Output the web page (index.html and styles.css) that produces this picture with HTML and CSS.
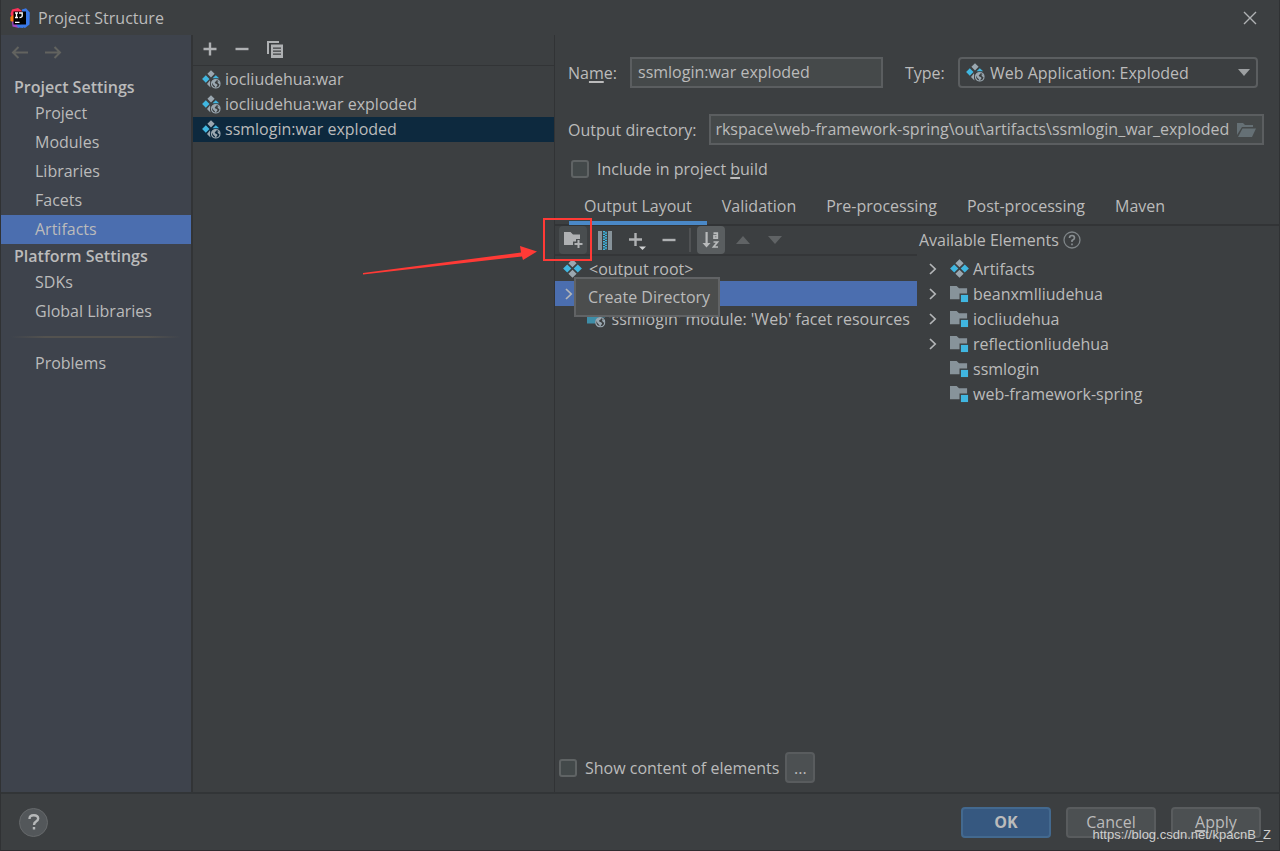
FILE: index.html
```html
<!DOCTYPE html>
<html lang="en">
<head>
<meta charset="utf-8">
<title>Project Structure</title>
<link rel="stylesheet" href="styles.css">
</head>
<body>
<svg class="defs" aria-hidden="true">
  <defs>
    <symbol id="artifact" viewBox="0 0 18 18">
      <path fill="#9aa7b0" d="M9 .2 12.900 4 9 7.900 5.100 4zM9 10.100l3.900 3.900L9 17.800 5.100 14z"/>
      <path fill="#40b6e0" d="M4 5.100 7.900 9 4 12.900.100 9zM14 5.100 17.900 9 14 12.900 10.100 9z"/>
    </symbol>
    <symbol id="globe" viewBox="0 0 10 10">
      <circle cx="5" cy="5" r="4.300" fill="none" stroke="#9aa7b0" stroke-width="1.200"/>
      <path fill="#9aa7b0" d="M1 3.500C1.500 2 3 .8 5 .8c1 .2 1 1 .3 1.600L4 3.200l.2 1.300 1.600.6 1 1.200L5.600 8 4.800 9.300 4 7.500 2.500 6zM7 2l2 1.500.3 2L7.800 5 6.800 3.600z"/>
    </symbol>
    <symbol id="web-artifact" viewBox="0 0 19 19">
      <path fill="#9aa7b0" d="M9 .2 12.600 3.800 9 7.400 5.400 3.800zM8 10.300 8.200 12.500 8 15l.5 2.400L5 14z"/>
      <path fill="#40b6e0" d="M3.800 5.200 7.500 9 3.800 12.800.100 9zM10.500 8.300 13.800 5.200 17.200 8.300z"/>
      <use href="#globe" x="8.800" y="8.800" width="10" height="10"/>
    </symbol>
    <symbol id="module" viewBox="0 0 20 18">
      <path fill="#87939a" d="M0 1h7l2.500 2.500H18V9h-8v6H0z"/>
      <path fill="#40b6e0" d="M11.500 10.500h7.500V18h-7.500z"/>
    </symbol>
    <symbol id="web-folder" viewBox="0 0 19 18">
      <path fill="#3e8ea8" d="M0 1h7l2.500 2.500H18V8h-5c-3 0-5 3-4.500 6H0z"/>
      <use href="#globe" x="8" y="7.500" width="10.500" height="10.500"/>
    </symbol>
    <symbol id="plus" viewBox="0 0 14 14"><path fill="#afb1b3" d="M5.800 .500h2.400v5.300H13.500v2.400H8.200V13.500H5.800V8.200H.500V5.800h5.300z"/></symbol>
    <symbol id="minus" viewBox="0 0 14 14"><path fill="#afb1b3" d="M.500 5.800h13v2.400H.500z"/></symbol>
    <symbol id="chevron" viewBox="0 0 8 12"><path fill="none" stroke="#b4b6b8" stroke-width="1.700" d="m1 1 5.200 5L1 11"/></symbol>
  </defs>
</svg>

<div class="dialog">
  <header class="titlebar">
    <svg class="logo" viewBox="0 0 20 20" aria-hidden="true">
      <path fill="#fc3159" d="M2 1.500 8 0l4 3v5L4 14 .500 6z"/>
      <path fill="#f97a12" d="M.3 9 4 6.500v8L.500 13z"/>
      <path fill="#a347c4" d="M2 13.500h5L9 20l-6.500-1.500z"/>
      <path fill="#3978e8" d="m12 1.500 4-1.200 3.800 4.200-.3 12L15 20l-4-1.500z"/>
      <path fill="#3978e8" d="m6 16 8 .500L13 20l-5-.500z"/>
      <path d="M3.500 3.500h12.500v13H3.500z"/>
      <path fill="none" stroke="#fff" stroke-width="1.300" d="M5 5h3M6.500 5v4.500M5 9.500h3M9 5h3.200v3Q12 9.500 9.500 9.500M5 14.300h4.500"/>
    </svg>
    <h1>Project Structure</h1>
    <button class="close" aria-label="Close"><svg viewBox="0 0 14 14" width="14" height="14"><path fill="none" stroke="#b0b2b4" stroke-width="1.400" d="m1 1 12 12M13 1 1 13"/></svg></button>
  </header>

  <div class="body">
    <nav class="sidebar" aria-label="Settings sections">
      <div class="history">
        <button aria-label="Back" disabled><svg viewBox="0 0 17 13" width="17" height="13"><path fill="none" stroke="#62635f" stroke-width="2" d="M17 6.500H2M7.500 1 2 6.500 7.500 12"/></svg></button>
        <button aria-label="Forward" disabled><svg viewBox="0 0 17 13" width="17" height="13"><path fill="none" stroke="#62635f" stroke-width="2" d="M0 6.500h15M9.500 1 15 6.500 9.500 12"/></svg></button>
      </div>
      <h2>Project Settings</h2>
      <a href="#project">Project</a>
      <a href="#modules">Modules</a>
      <a href="#libraries">Libraries</a>
      <a href="#facets">Facets</a>
      <a href="#artifacts" class="current" aria-current="page">Artifacts</a>
      <h2>Platform Settings</h2>
      <a href="#sdks">SDKs</a>
      <a href="#global">Global Libraries</a>
      <hr>
      <a href="#problems">Problems</a>
    </nav>

    <section class="artifacts" aria-label="Artifacts">
      <div class="list-tools">
        <button aria-label="Add"><svg width="14" height="14"><use href="#plus"/></svg></button>
        <button aria-label="Remove"><svg width="14" height="14"><use href="#minus"/></svg></button>
        <button aria-label="Copy"><svg width="16" height="17" viewBox="0 0 16 17"><path fill="#afb1b3" d="M0 0h12v2H2v11H0z"/><path fill="#afb1b3" fill-rule="evenodd" d="M4 3.500h12V17H4zM6 6.500v1.200h8V6.500zM6 9.500v1.200h8V9.500zM6 12.500v1.200h8v-1.200z"/></svg></button>
      </div>
      <ul class="rows">
        <li><svg class="icon"><use href="#web-artifact"/></svg>iocliudehua:war</li>
        <li><svg class="icon"><use href="#web-artifact"/></svg>iocliudehua:war exploded</li>
        <li class="chosen"><svg class="icon"><use href="#web-artifact"/></svg>ssmlogin:war exploded</li>
      </ul>
    </section>

    <main class="editor">
      <div class="name-row">
        <label for="name">Na<u>m</u>e:</label>
        <input class="field" id="name" type="text" value="ssmlogin:war exploded">
        <label class="type-label" for="type">Type:</label>
        <div class="type">
          <svg class="icon"><use href="#web-artifact"/></svg>
          <select id="type"><option>Web Application: Exploded</option></select>
          <svg class="arrow" viewBox="0 0 12 7"><path fill="#9c9fa1" d="M0 0h12L6 7z"/></svg>
        </div>
      </div>
      <div class="output-row">
        <label for="output">Output directory:</label>
        <div class="field path">
          <input id="output" type="text" value="Workspace\web-framework-spring\out\artifacts\ssmlogin_war_exploded">
          <button aria-label="Browse"><svg viewBox="0 0 19 14" width="19" height="14"><path fill="#657075" d="M0 0h6l2 2h8v2H5L0 12zM5.500 5.500H19L15 14H1z"/></svg></button>
        </div>
      </div>
      <label class="check build"><input type="checkbox"><span>Include in project <u>b</u>uild</span></label>

      <div class="tabs" role="tablist">
        <button role="tab" class="active" aria-selected="true">Output Layout</button>
        <button role="tab">Validation</button>
        <button role="tab">Pre-processing</button>
        <button role="tab">Post-processing</button>
        <button role="tab">Maven</button>
      </div>

      <div class="layout">
        <section class="output" aria-label="Output layout">
          <div class="tools">
            <button class="hover" aria-label="Create Directory"><svg width="19" height="16" viewBox="0 0 19 16"><path fill="#afb1b3" d="M0 0h6.500L9 2.500h7V7h-4v2.500H9V13H0z"/><path fill="#afb1b3" d="M13.500 8h2v3H18.500v2h-3v3h-2v-3h-3v-2h3z"/></svg></button>
            <button aria-label="Create Archive"><svg width="14" height="19" viewBox="0 0 14 19"><path fill="#87939a" d="M0 0h4v19H0zM10 0h4v19h-4z"/><path fill="none" stroke="#40b6e0" stroke-width="2" stroke-dasharray="1.500 1" d="M6 0v19"/><path fill="none" stroke="#40b6e0" stroke-width="2" stroke-dasharray="1.500 1" stroke-dashoffset="1.200" d="M8 0v19"/></svg></button>
            <button aria-label="Add Copy of"><svg width="20" height="20" viewBox="0 0 20 20"><path fill="#afb1b3" d="M7.300 3h2.400v5.300H15v2.400H9.700V16H7.300v-5.300H2V8.300h5.300z"/><path fill="#d0d2d3" d="M12 16.500h7L15.500 20z"/></svg></button>
            <button aria-label="Remove"><svg width="14" height="14"><use href="#minus"/></svg></button>
            <i class="divider"></i>
            <button class="pressed" aria-label="Sort by name" aria-pressed="true"><svg width="18" height="18" viewBox="0 0 18 18"><path fill="#b8babb" d="M3.500 1h2.200v11H8.500l-4 4.500L.500 12h3z"/><path fill="none" stroke="#b8babb" stroke-width="1.700" d="M11.500 2.200H15.300V7.200H12V4.700h3.300M11.500 11h4l-4 5h4.500"/></svg></button>
            <button aria-label="Move Up" disabled><svg width="14" height="8" viewBox="0 0 14 8"><path fill="#606365" d="M0 8h14L7 0z"/></svg></button>
            <button aria-label="Move Down" disabled><svg width="14" height="8" viewBox="0 0 14 8"><path fill="#606365" d="M0 0h14L7 8z"/></svg></button>
          </div>
          <ul class="rows tree">
            <li><svg class="icon"><use href="#artifact"/></svg>&lt;output root&gt;</li>
            <li class="focused" aria-label="Selected element"><svg class="chevron"><use href="#chevron"/></svg></li>
            <li class="nested"><svg class="icon"><use href="#web-folder"/></svg>'ssmlogin' module: 'Web' facet resources</li>
          </ul>
          <div class="tooltip" role="tooltip">Create Directory</div>
          <div class="highlight"></div>
          <svg class="pointer" viewBox="0 0 176 32" aria-hidden="true"><path fill="#ff3a36" d="M1 28 159 7.500 158 1l17 5.500L161 15l-1-3.500L1 29.500z"/></svg>
        </section>
        <section class="available">
          <h3>Available Elements <svg viewBox="0 0 18 18" width="18" height="18" aria-hidden="true"><circle cx="9" cy="9" r="8" fill="none" stroke="#7f8588" stroke-width="1.300"/><path fill="none" stroke="#8b9194" stroke-width="1.600" d="M6.500 7q0-2.500 2.500-2.500T11.500 7Q11.500 8.200 9 9.500V11M9 12.500v1.700"/></svg></h3>
          <ul class="rows">
            <li><svg class="chevron"><use href="#chevron"/></svg><svg class="icon"><use href="#artifact"/></svg>Artifacts</li>
            <li><svg class="chevron"><use href="#chevron"/></svg><svg class="icon"><use href="#module"/></svg>beanxmlliudehua</li>
            <li><svg class="chevron"><use href="#chevron"/></svg><svg class="icon"><use href="#module"/></svg>iocliudehua</li>
            <li><svg class="chevron"><use href="#chevron"/></svg><svg class="icon"><use href="#module"/></svg>reflectionliudehua</li>
            <li class="leaf"><svg class="icon"><use href="#module"/></svg>ssmlogin</li>
            <li class="leaf"><svg class="icon"><use href="#module"/></svg>web-framework-spring</li>
          </ul>
        </section>
      </div>

      <div class="content-row">
        <label class="check"><input type="checkbox"><span>Show content of elements</span></label>
        <button class="btn more">...</button>
      </div>
    </main>
  </div>

  <footer class="footer">
    <button class="help" aria-label="Help"><svg width="12" height="16" viewBox="0 0 12 16"><path fill="none" stroke="#b6b8b9" stroke-width="2.400" d="M1.500 5Q1.500 1.200 5.800 1.200T10.200 4.600Q10.200 6.200 8 7.600 6 8.700 6 11M6 13v2.500"/></svg></button>
    <button class="btn primary">OK</button>
    <button class="btn">Cancel</button>
    <button class="btn"><span><u>A</u>pply</span></button>
    <span class="watermark">https://blog.csdn.net/kpacnB_Z</span>
  </footer>
</div>
<script src="app.js"></script>
</body>
</html>
```
FILE: styles.css
```css
* { box-sizing: border-box; }
body {
  margin: 0;
  background: #3c3f41;
  color: #bbbbbb;
  font: 16px/24px "Open Sans", "Noto Sans", sans-serif;
}
button, input, select { font: inherit; color: inherit; margin: 0; }
button { border: 0; padding: 0; background: none; display: flex; align-items: center; justify-content: center; }
h1, h2, h3, ul { margin: 0; padding: 0; font-size: inherit; font-weight: 400; }
ul { list-style: none; }
svg { flex: none; display: block; }
u { text-underline-offset: 2px; text-decoration-thickness: 2px; text-decoration-skip-ink: none; }
.defs { position: absolute; width: 0; height: 0; }

.dialog {
  min-height: 100vh;
  display: flex;
  flex-direction: column;
  border-left: 1px solid #303234;
  border-right: 1px solid #303234;
  border-bottom: 1px solid #2e2c30;
}
.titlebar { display: flex; align-items: center; gap: 8px; height: 35px; padding: 0 22px 0 9px; }
.titlebar .logo { width: 20px; height: 20px; }
.close { margin-left: auto; }

.body { flex: 1; display: flex; border-bottom: 2px solid #323537; }

.sidebar { width: 192px; flex: none; background: #3e434c; border-right: 2px solid #323436; }
.history { display: flex; gap: 17px; height: 40px; padding: 11px 10px 0; align-items: flex-start; }
.sidebar h2 { font-weight: 600; padding-left: 13px; }
.sidebar a { display: block; line-height: 29px; padding-left: 34px; color: inherit; text-decoration: none; }
.sidebar .current { background: #4b6eaf; }
.sidebar hr { border: 0; height: 2px; margin: 10px 10px 11px; background: linear-gradient(90deg, transparent, #53524f 20%, #53524f 80%, transparent); }

.artifacts { width: 362px; flex: none; border-right: 1px solid #313335; }
.list-tools { display: flex; align-items: center; gap: 18px; height: 31px; padding: 0 0 2px 10px; border-bottom: 1px solid #323436; }
.rows { padding-top: 1px; }
.rows li { display: flex; align-items: center; height: 25px; white-space: nowrap; }
.icon { width: 19px; height: 19px; }
.artifacts li { gap: 4px; padding: 0 0 1px 9px; }
.artifacts .chosen { background: #0d293e; }

.editor { flex: 1; min-width: 0; display: flex; flex-direction: column; }
.field { background: #45494a; border: 2px solid #5b5e60; height: 31px; min-width: 0; }
.name-row { display: grid; grid-template-columns: 62px 253fr 75px 300fr; align-items: center; padding: 22px 21px 0 13px; }
.name-row .field { width: 100%; padding: 0 6px 2px; }
.type-label { padding-left: 22px; }
.type { position: relative; }
.type select { width: 100%; height: 31px; padding: 0 30px; appearance: none; background: #3c3f41; border: 2px solid #5b5e60; border-radius: 4px; }
.type .icon { position: absolute; left: 8px; top: 6px; }
.type .arrow { position: absolute; right: 8px; top: 12px; width: 12px; height: 7px; }
.output-row { display: grid; grid-template-columns: 141px 1fr; align-items: center; padding: 26px 15px 0 13px; }
.path { display: flex; align-items: center; gap: 8px; padding: 0 6px 0 4px; }
.path input { flex: 1; min-width: 0; border: 0; padding: 0 0 1px; background: none; }
.check { display: flex; align-items: center; gap: 8px; }
.check input { appearance: none; width: 18px; height: 18px; border: 2px solid #5f6364; border-radius: 3px; background: #43494a; }
.build { padding: 12px 0 0 16px; }

.tabs { display: flex; margin-top: 9px; padding-left: 14px; border-bottom: 2px solid #323436; }
.tabs button { height: 35px; padding: 0 15px; border-bottom: 4px solid transparent; margin-bottom: -1px; }
.tabs .active { border-bottom-color: #4a88c7; }

.layout { flex: 1; display: grid; grid-template-columns: 1fr 1fr; }
.output { position: relative; }
.tools { display: flex; align-items: center; gap: 4px; height: 30px; padding: 0 4px 0 4px; border-bottom: 2px solid #343638; }
.tools button { width: 28px; height: 28px; border-radius: 4px; }
.tools .hover { background: #494d4f; }
.tools .pressed { background: #5a5e60; }
.divider { width: 2px; height: 24px; margin: 0 2px; background: #505254; }
.rows.tree { padding-top: 0; }
.tree li { gap: 7px; padding-left: 8px; }
.tree .focused { background: #4b6eaf; padding-left: 10px; }
.tree .nested { gap: 2px; padding-left: 32px; }
.chevron { width: 8px; height: 12px; }
.tooltip { position: absolute; left: 19px; top: 51px; padding: 6px 8px 6px 12px; background: #4b4d4d; border: 2px solid #616365; white-space: nowrap; }
.highlight { position: absolute; left: -12px; top: -8px; width: 49px; height: 43px; border: 2px solid #ff3a36; }
.pointer { position: absolute; left: -193px; top: 19px; width: 176px; height: 32px; }
.available h3 { display: flex; align-items: center; gap: 4px; height: 27px; padding-left: 2px; }
.available .rows { padding-top: 3px; }
.available li { gap: 4px; padding-left: 12px; }
.available .chevron { margin-right: 9px; }
.available .leaf { padding-left: 33px; }

.content-row { display: flex; align-items: center; gap: 6px; padding: 0 4px 9px; }
.btn { width: 90px; height: 31px; border: 2px solid #595c5e; border-radius: 4px; background: #4c5052; }
.more { width: 30px; }

.footer { position: relative; display: flex; align-items: center; gap: 15px; height: 56px; padding: 0 18px; }
.help { width: 29px; height: 29px; margin-right: auto; border: 1px solid #66696b; border-radius: 50%; background: #53575a; }
.primary { background: #365880; border-color: #43698f; font-weight: 700; }
.watermark { position: absolute; right: 8px; bottom: 5px; font: 13px/20px "Liberation Sans", Arial, sans-serif; color: #cfcfcf; }
```
FILE: app.js
```js
// Long paths show their final segment first.
const output = document.getElementById("output");
output.scrollLeft = output.scrollWidth;
```
